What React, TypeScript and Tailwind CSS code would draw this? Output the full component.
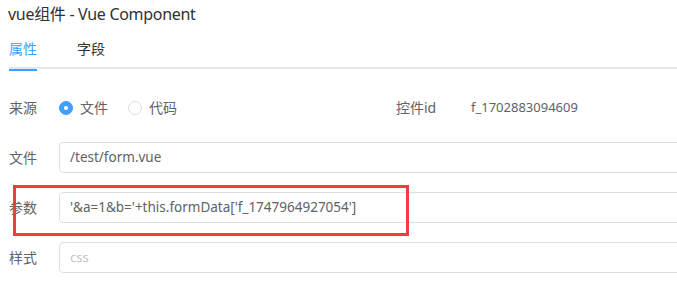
export default function App() {
  const font = "font-['Noto_Sans','Noto_Sans_CJK_SC',sans-serif]"

  return (
    <div className={`relative w-[677px] h-[291px] overflow-hidden bg-white ${font}`}>
      <div className="h-[28px] pl-[8px] flex items-center text-[16px] text-[#303133] tracking-[-0.3px]">
        vue组件 - Vue Component
      </div>

      {/* tabs */}
      <div className="ml-[9px] mt-[6px] flex items-start border-b-2 border-[#e4e7ed] h-[35px] pt-[4px] text-[14px]">
        <div className="relative h-[31px] text-[#409eff]">
          属性
          <div className="absolute left-0 right-0 -bottom-[2px] h-[2px] bg-[#409eff]" />
        </div>
        <div className="ml-[40px] text-[#303133]">字段</div>
      </div>

      <div className="mt-[23px] pl-[9px] text-[14px] text-[#606266]">
        <div className="flex items-center h-[31px] mb-[19px]">
          <div className="w-[50px]">来源</div>
          <label className="flex items-center">
            <span className="w-[14px] h-[14px] rounded-full bg-[#409eff] border border-[#409eff] flex items-center justify-center">
              <span className="w-[4px] h-[4px] rounded-full bg-white" />
            </span>
            <span className="ml-[7px] text-[#606266]">文件</span>
          </label>
          <label className="flex items-center ml-[20px]">
            <span className="w-[14px] h-[14px] rounded-full border border-[#dcdfe6] bg-white" />
            <span className="ml-[7px]">代码</span>
          </label>
          <div className="ml-[219px] w-[75px]">控件id</div>
          <div className="text-[13px]">f_1702883094609</div>
        </div>

        <div className="flex items-center h-[31px] mb-[19px]">
          <div className="w-[50px] shrink-0">文件</div>
          <div className="w-[700px] shrink-0 h-full border border-[#dcdfe6] rounded-[4px] px-[10px] flex items-center text-[13.5px]">
            /test/form.vue
          </div>
        </div>

        <div className="flex items-center h-[31px] mb-[19px]">
          <div className="w-[50px] shrink-0">参数</div>
          <div className="w-[700px] shrink-0 h-full border border-[#dcdfe6] rounded-[4px] px-[10px] flex items-center text-[13.5px]">
            '&amp;a=1&amp;b='+this.formData['f_1747964927054']
          </div>
        </div>

        <div className="flex items-center h-[31px]">
          <div className="w-[50px] shrink-0">样式</div>
          <div className="w-[700px] shrink-0 h-full border border-[#dcdfe6] rounded-[4px] px-[10px] flex items-center text-[13px] text-[#c0c4cc]">
            css
          </div>
        </div>
      </div>

      {/* annotation */}
      <div className="absolute left-[13px] top-[185px] w-[396px] h-[51px] border-[3px] border-[#f53c3c]" />
    </div>
  )
}
